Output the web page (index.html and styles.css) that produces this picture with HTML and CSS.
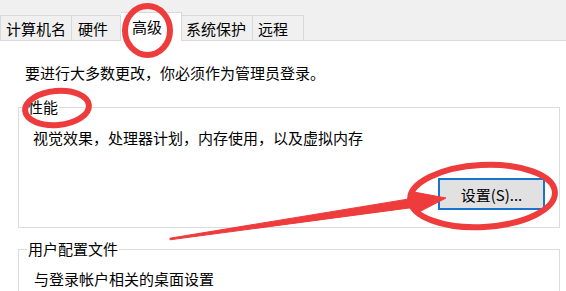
FILE: index.html
```html
<!DOCTYPE html>
<html lang="zh-CN">
<head>
<meta charset="utf-8">
<title>系统属性 - 高级</title>
<link rel="stylesheet" href="styles.css">
</head>
<body>
<div class="window">
  <div class="tabstrip">
    <div class="tab t1">计算机名</div>
    <div class="tab t2">硬件</div>
    <div class="tab t3 selected">高级</div>
    <div class="tab t4">系统保护</div>
    <div class="tab t5">远程</div>
  </div>
  <div class="content">
    <p class="note">要进行大多数更改，你必须作为管理员登录。</p>
    <fieldset class="group perf">
      <legend>性能</legend>
      <p class="desc">视觉效果，处理器计划，内存使用，以及虚拟内存</p>
      <div class="actions"><button class="btn" type="button">设置(S)...</button></div>
    </fieldset>
    <fieldset class="group profile">
      <legend>用户配置文件</legend>
      <p class="desc">与登录帐户相关的桌面设置</p>
    </fieldset>
  </div>
  <svg class="annot" width="566" height="291" viewBox="0 0 566 291">
    <ellipse cx="147.5" cy="30.5" rx="22.5" ry="24.5" class="mark"/>
    <ellipse cx="57" cy="108" rx="32" ry="17" class="mark" transform="rotate(-5 57 108)"/>
    <ellipse cx="482.5" cy="196" rx="72.5" ry="31" class="mark" transform="rotate(-3 482.5 196)"/>
    <polygon class="arrow" points="169.9,238.2 413.6,198.2 412.7,191.8 446,198 415.9,213.6 415,207.2 170.1,239.8"/>
  </svg>
</div>
</body>
</html>
```
FILE: styles.css
```css
html, body {
  margin: 0;
  padding: 0;
  background: #ffffff;
}
.window {
  position: relative;
  width: 566px;
  height: 291px;
  overflow: hidden;
  font-family: "Noto Sans CJK SC", "Noto Sans", sans-serif;
  font-size: 15px;
  color: #000;
  background: #fff;
}
.tabstrip {
  display: flex;
  align-items: flex-end;
  height: 41px;
  box-sizing: border-box;
  background: #f0f0f0;
  border-bottom: 1px solid #d9d9d9;
}
.tab {
  box-sizing: border-box;
  height: 25px;
  padding-top: 3px;
  padding-left: 5px;
  line-height: 20px;
  white-space: nowrap;
  background: #f0f0f0;
  border-top: 1px solid #d9d9d9;
  border-right: 1px solid #d9d9d9;
}
.t1 { width: 72px; border-left: 1px solid #d9d9d9; padding-left: 5px; }
.t2 { width: 49px; padding-left: 6px; }
.t3 { width: 61px; padding-left: 11px; }
.t4 { width: 71px; padding-left: 4px; }
.t5 { width: 51px; padding-left: 5px; }
.tab.selected {
  height: 29px;
  margin-bottom: -1px;
  padding-top: 4px;
  background: #ffffff;
}
.content {
  padding: 22px 6px 0 18px;
}
.note {
  margin: 0 0 0 7px;
  line-height: 20px;
}
.group {
  margin: 14px 0 0 0;
  padding: 11px 14px 17px 8px;
  border: 1px solid #dcdcdc;
  min-width: 0;
}
.group legend {
  padding: 0 1px;
  line-height: 20px;
}
.profile {
  margin-top: 11px;
  padding-top: 10px;
}
.desc {
  margin: 0 0 0 6px;
  line-height: 20px;
}
.profile .desc {
  margin-left: 7px;
}
.actions {
  display: flex;
  justify-content: flex-end;
  margin-top: 30px;
}
.btn {
  box-sizing: border-box;
  width: 107px;
  height: 32px;
  padding: 0;
  font-family: "Noto Sans CJK SC", "Noto Sans", sans-serif;
  font-size: 15px;
  color: #000;
  background: #e1e1e1;
  border: 2px solid #1874cd;
  border-radius: 0;
}
.annot {
  position: absolute;
  left: 0;
  top: 0;
  pointer-events: none;
}
.mark {
  fill: none;
  stroke: #ee3b3b;
  stroke-width: 6;
}
.arrow {
  fill: #ee3b3b;
  stroke: #ee3b3b;
  stroke-width: 1;
  stroke-linejoin: round;
}
```
